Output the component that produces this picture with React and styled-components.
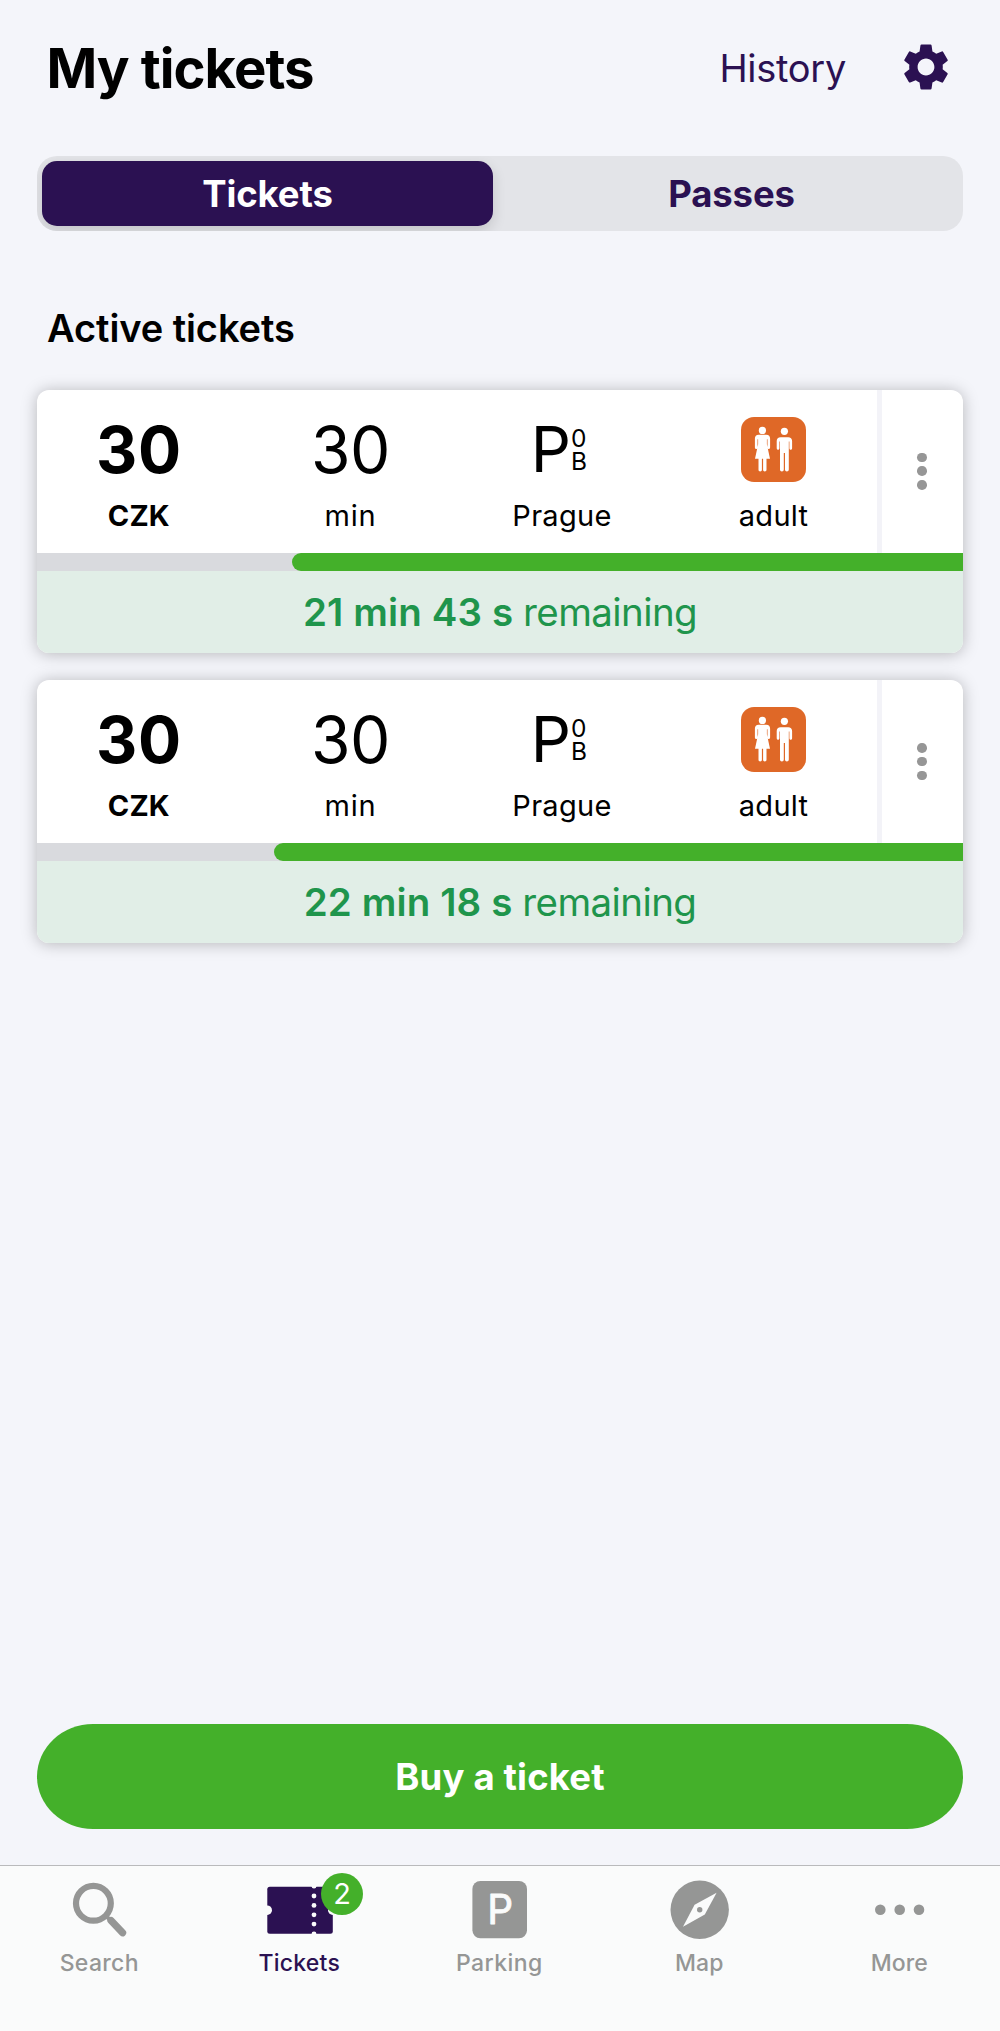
import React from "react";
import styled, { createGlobalStyle } from "styled-components";
import { MdSettings } from "react-icons/md";

const PURPLE = "#2b1152";
const GREEN = "#44b02a";
const GREY = "#959695";
const BAR_BG = "#fafbfb";

const GlobalStyle = createGlobalStyle`
  *, *::before, *::after { box-sizing: border-box; }
  body { margin: 0; background: #f4f5fa; }
  button { font: inherit; border: 0; background: none; padding: 0; margin: 0; color: inherit; }
`;

const Screen = styled.div`
  width: 1000px;
  height: 2031px;
  display: flex;
  flex-direction: column;
  overflow: hidden;
  background: #f4f5fa;
  color: #000;
  font-family: Inter, "Liberation Sans", sans-serif;
`;

const Header = styled.header`
  height: 137px;
  padding: 0 46.5px 0 46.5px;
  display: flex;
  align-items: center;
`;

const Title = styled.h1`
  margin: 0;
  padding-bottom: 2px;
  flex: 1;
  font-size: 54.5px;
  line-height: 66px;
  font-weight: 700;
  letter-spacing: -0.97px;
`;

const HistoryLink = styled.button`
  margin-right: 51.5px;
  padding-bottom: 1px;
  color: ${PURPLE};
  font-size: 38px;
  line-height: 46px;
  letter-spacing: -0.29px;
`;

const SettingsButton = styled.button`
  display: flex;
  padding-bottom: 3px;
  color: ${PURPLE};
  font-size: 56px;
`;

const Segmented = styled.div`
  height: 75px;
  margin: 19px 37px 0;
  display: grid;
  grid-template-columns: 1fr 1fr;
  border-radius: 20px;
  background: #e3e4e8;
  overflow: hidden;
`;

const Segment = styled.button`
  margin: 5px 7px 5px 5px;
  border-radius: 15px;
  font-size: 36.5px;
  font-weight: 700;
  letter-spacing: -0.12px;
  color: ${(p) => (p.$selected ? "#fff" : PURPLE)};
  background: ${(p) => (p.$selected ? PURPLE : "transparent")};
  box-shadow: ${(p) => (p.$selected ? "0 5px 14px rgba(0, 0, 0, 0.14)" : "none")};
`;

const PlainSegment = styled(Segment)`
  margin-right: 5px;
  margin-left: 5px;
`;

const SectionTitle = styled.h2`
  margin: 67px 47px 0;
  height: 60px;
  font-size: 38px;
  line-height: 60px;
  font-weight: 600;
  letter-spacing: -0.08px;
`;

const TicketList = styled.main`
  flex: 1;
  padding: 32px 37px 0;
  display: flex;
  flex-direction: column;
  gap: 27.8px;
`;

const Card = styled.article`
  height: 262.6px;
  flex: none;
  border-radius: 12px;
  background: #fff;
  box-shadow: 0 1px 16px rgba(0, 0, 0, 0.26);
  overflow: hidden;
`;

const CardTop = styled.div`
  height: 162.5px;
  display: flex;
`;

const Facts = styled.div`
  width: 840px;
  padding-right: 1.6px;
  display: grid;
  grid-template-columns: repeat(4, 211.6px);
  justify-content: center;
`;

const Fact = styled.div`
  padding-top: 27px;
  display: flex;
  flex-direction: column;
  align-items: center;
  font-weight: ${(p) => (p.$bold ? 700 : 400)};
`;

const FactValue = styled.div`
  height: 65px;
  display: flex;
  align-items: center;
  font-size: 64px;
  line-height: 65px;
  letter-spacing: ${(p) => (p.$bold ? "0.6px" : "-0.5px")};
`;

const FactLabel = styled.div`
  margin-top: 16px;
  font-size: 29px;
  line-height: 35px;
  letter-spacing: ${(p) => p.$spacing || 0.3}px;
`;

const Zone = styled.div`
  display: flex;
  align-items: center;
  padding-right: 6px;
  font-size: 63px;
  letter-spacing: 0;
`;

const ZoneBands = styled.div`
  display: flex;
  flex-direction: column;
  font-size: 24.5px;
  line-height: 23px;
`;

const MenuButton = styled.button`
  flex: 1;
  padding-right: 1px;
  border-left: 5px solid #f3f3f8;
  display: flex;
  flex-direction: column;
  align-items: center;
  justify-content: center;
  gap: 4.2px;
`;

const MenuDot = styled.span`
  width: 9.6px;
  height: 9.6px;
  border-radius: 50%;
  background: #969696;
`;

const Track = styled.div`
  height: 18.5px;
  display: flex;
  justify-content: flex-end;
  background: #d9dade;
`;

const Fill = styled.div`
  border-radius: 10px 0 0 10px;
  background: ${GREEN};
`;

const Remaining = styled.div`
  height: 81.6px;
  display: flex;
  align-items: center;
  justify-content: center;
  background: #e1eee7;
  color: #1f954c;
  font-size: 38.5px;
  letter-spacing: -0.6px;
  white-space: pre;
`;

const TimeLeft = styled.strong`
  font-weight: 600;
  letter-spacing: 0.12px;
`;

const BuyButton = styled.button`
  height: 105px;
  margin: 0 37px 36px;
  flex: none;
  border-radius: 56px / 52.5px;
  background: ${GREEN};
  color: #fff;
  font-size: 36.5px;
  font-weight: 700;
  letter-spacing: 0.17px;
`;

const TabBar = styled.nav`
  height: 166px;
  flex: none;
  display: grid;
  grid-template-columns: repeat(5, 1fr);
  border-top: 1px solid #b9babc;
  background: ${BAR_BG};
`;

const Tab = styled.button`
  padding-top: 12px;
  display: flex;
  flex-direction: column;
  align-items: center;
  color: ${(p) => (p.$active ? PURPLE : GREY)};
`;

const TabIcon = styled.span`
  position: relative;
  width: 68px;
  height: 62px;
`;

const TabSvg = styled.svg`
  display: block;
  width: 68px;
  height: 62px;
`;

const TabLabel = styled.span`
  margin-top: 9px;
  padding-right: 1.5px;
  font-size: 23px;
  line-height: 28px;
  font-weight: 500;
  letter-spacing: ${(p) => p.$spacing}px;
`;

const Badge = styled.span`
  position: absolute;
  left: 55px;
  top: -5px;
  width: 42px;
  height: 42px;
  border-radius: 50%;
  background: ${GREEN};
  color: #fff;
  font-size: 29px;
  line-height: 42px;
  text-align: center;
`;

const AdultIcon = () => (
  <svg width="65" height="65" viewBox="0 0 65 65">
    <rect width="65" height="65" rx="13" fill="#df6827" />
    <g fill="#fff">
      <circle cx="21.4" cy="13.4" r="3.6" />
      <path d="M17.6 17.8h7.8c2.3 0 3.7 1.5 3.7 3.8v9c0 .9-.6 1.5-1.3 1.5s-1.3-.6-1.3-1.5v-8.4h-.6v5l3.1 14.6h-3.5v11c0 1-.7 1.6-1.7 1.6s-1.7-.6-1.7-1.6v-11h-1.2v11c0 1-.7 1.6-1.7 1.6s-1.7-.6-1.7-1.6v-11H14l3.1-14.6v-5h-.6v8.4c0 .9-.6 1.5-1.3 1.5s-1.3-.6-1.3-1.5v-9c0-2.3 1.4-3.8 3.7-3.8z" />
      <circle cx="43.4" cy="14.3" r="3.6" />
      <path d="M39.6 20.2h7.6c2.4 0 3.9 1.5 3.9 3.8v7.3c0 .9-.6 1.5-1.4 1.5s-1.3-.6-1.3-1.5v-6.9h-.6v28.2c0 1.2-.8 1.9-1.9 1.9s-1.9-.7-1.9-1.9V36h-1.2v16.6c0 1.2-.8 1.9-1.9 1.9s-1.9-.7-1.9-1.9V24.4h-.6v6.9c0 .9-.6 1.5-1.3 1.5s-1.4-.6-1.4-1.5V24c0-2.3 1.5-3.8 3.9-3.8z" />
    </g>
  </svg>
);

const SearchIcon = () => (
  <TabSvg viewBox="0 0 68 62" fill="none" stroke="currentColor">
    <circle cx="27.4" cy="25.3" r="17.4" strokeWidth="6.2" />
    <path d="M40 37.8l4 4" strokeWidth="4" />
    <path d="M45 42.6l11.6 12.2" strokeWidth="7.2" strokeLinecap="round" />
  </TabSvg>
);

const TicketIcon = () => (
  <TabSvg viewBox="0 0 68 62">
    <rect x="1.3" y="8.7" width="65.5" height="47" rx="2.5" fill="currentColor" />
    <g fill={BAR_BG}>
      <circle cx="1.2" cy="32.2" r="4.8" />
      <circle cx="66.8" cy="32.2" r="4.8" />
      {[8.2, 18, 27.4, 36.8, 46.1, 56].map((y) => (
        <circle key={y} cx="48" cy={y} r="2.4" />
      ))}
    </g>
  </TabSvg>
);

const ParkingIcon = () => (
  <TabSvg viewBox="0 0 68 62">
    <rect x="6.4" y="3" width="54.6" height="57.3" rx="8" fill="currentColor" />
    <text
      x="21.2"
      y="46.4"
      fill={BAR_BG}
      stroke={BAR_BG}
      strokeWidth="0.9"
      strokeLinejoin="round"
      fontSize="40.5"
      fontWeight="400"
    >
      P
    </text>
  </TabSvg>
);

const MapIcon = () => (
  <TabSvg viewBox="0 0 68 62">
    <circle cx="33.7" cy="31.8" r="29.2" fill="currentColor" />
    <path d="M50.6 14.7L38.8 36.6 17 48.7l11.6-21.9z" fill={BAR_BG} />
    <circle cx="33.7" cy="31.8" r="2.7" fill="currentColor" />
  </TabSvg>
);

const MoreIcon = () => (
  <TabSvg viewBox="0 0 68 62" fill="currentColor">
    <circle cx="14.3" cy="31.8" r="5.3" />
    <circle cx="33.7" cy="31.8" r="5.3" />
    <circle cx="53" cy="31.8" r="5.3" />
  </TabSvg>
);

const tickets = [
  { id: 1, time: "21 min 43 s", left: 671 },
  { id: 2, time: "22 min 18 s", left: 688.6 },
];

const tabs = [
  { label: "Search", Icon: SearchIcon, spacing: 0.32 },
  { label: "Tickets", Icon: TicketIcon, spacing: 0.24, active: true, badge: 2 },
  { label: "Parking", Icon: ParkingIcon, spacing: 0.42 },
  { label: "Map", Icon: MapIcon, spacing: 0 },
  { label: "More", Icon: MoreIcon, spacing: 0.05 },
];

const Ticket = ({ time, left }) => (
  <Card>
    <CardTop>
      <Facts>
        <Fact $bold>
          <FactValue $bold>30</FactValue>
          <FactLabel $spacing={0.14}>CZK</FactLabel>
        </Fact>
        <Fact>
          <FactValue>30</FactValue>
          <FactLabel $spacing={0.7}>min</FactLabel>
        </Fact>
        <Fact>
          <FactValue>
            <Zone>
              P
              <ZoneBands>
                <span>0</span>
                <span>B</span>
              </ZoneBands>
            </Zone>
          </FactValue>
          <FactLabel>Prague</FactLabel>
        </Fact>
        <Fact>
          <FactValue>
            <AdultIcon />
          </FactValue>
          <FactLabel>adult</FactLabel>
        </Fact>
      </Facts>
      <MenuButton aria-label="Ticket options">
        <MenuDot />
        <MenuDot />
        <MenuDot />
      </MenuButton>
    </CardTop>
    <Track>
      <Fill style={{ width: left }} />
    </Track>
    <Remaining>
      <TimeLeft>{time} </TimeLeft>
      remaining
    </Remaining>
  </Card>
);

export default function App() {
  return (
    <Screen>
      <GlobalStyle />
      <Header>
        <Title>My tickets</Title>
        <HistoryLink>History</HistoryLink>
        <SettingsButton aria-label="Settings">
          <MdSettings />
        </SettingsButton>
      </Header>
      <Segmented>
        <Segment $selected>Tickets</Segment>
        <PlainSegment>Passes</PlainSegment>
      </Segmented>
      <SectionTitle>Active tickets</SectionTitle>
      <TicketList>
        {tickets.map((t) => (
          <Ticket key={t.id} time={t.time} left={t.left} />
        ))}
      </TicketList>
      <BuyButton>Buy a ticket</BuyButton>
      <TabBar>
        {tabs.map(({ label, Icon, spacing, active, badge }) => (
          <Tab key={label} $active={active}>
            <TabIcon>
              <Icon />
              {badge && <Badge>{badge}</Badge>}
            </TabIcon>
            <TabLabel $spacing={spacing}>{label}</TabLabel>
          </Tab>
        ))}
      </TabBar>
    </Screen>
  );
}
